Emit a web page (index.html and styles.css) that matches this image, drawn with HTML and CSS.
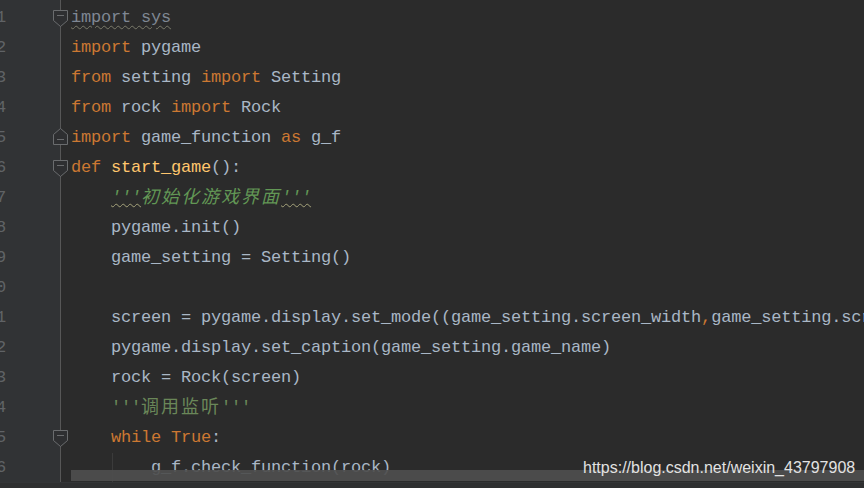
FILE: index.html
```html
<!DOCTYPE html>
<html>
<head>
<meta charset="utf-8">
<link rel="stylesheet" href="styles.css">
</head>
<body>
<div class="ide">
  <div class="gutter">
    <div class="gl"><span class="num">1</span><svg class="fold" viewBox="0 0 15 17"><path d="M0.5 0.5H14.5V10.5L7.5 16.5L0.5 10.5Z"/><path d="M4 5.5H11"/></svg></div>
    <div class="gl"><span class="num">2</span></div>
    <div class="gl"><span class="num">3</span></div>
    <div class="gl"><span class="num">4</span></div>
    <div class="gl"><span class="num">5</span><svg class="fold end" viewBox="0 0 15 17"><path d="M0.5 6.5L7.5 0.5L14.5 6.5V16.5H0.5Z"/><path d="M4 11.5H11"/></svg></div>
    <div class="gl"><span class="num">6</span><svg class="fold" viewBox="0 0 15 17"><path d="M0.5 0.5H14.5V10.5L7.5 16.5L0.5 10.5Z"/><path d="M4 5.5H11"/></svg></div>
    <div class="gl"><span class="num">7</span></div>
    <div class="gl"><span class="num">8</span></div>
    <div class="gl"><span class="num">9</span></div>
    <div class="gl"><span class="num">10</span></div>
    <div class="gl"><span class="num">11</span></div>
    <div class="gl"><span class="num">12</span></div>
    <div class="gl"><span class="num">13</span></div>
    <div class="gl"><span class="num">14</span></div>
    <div class="gl"><span class="num">15</span><svg class="fold" viewBox="0 0 15 17"><path d="M0.5 0.5H14.5V10.5L7.5 16.5L0.5 10.5Z"/><path d="M4 5.5H11"/></svg></div>
    <div class="gl"><span class="num">16</span></div>
  </div>
  <div class="code">
    <div class="l"><span class="unused">import sys</span></div>
    <div class="l"><span class="k">import</span> pygame</div>
    <div class="l"><span class="k">from</span> setting <span class="k">import</span> Setting</div>
    <div class="l"><span class="k">from</span> rock <span class="k">import</span> Rock</div>
    <div class="l"><span class="k">import</span> game_function <span class="k">as</span> g_f</div>
    <div class="l"><span class="k">def</span> <span class="fn">start_game</span>():</div>
    <div class="l">    <span class="doc"><span class="wavy">'''</span><span class="cjk">初始化游戏界面</span><span class="wavy">'''</span></span></div>
    <div class="l">    pygame.init()</div>
    <div class="l">    game_setting = Setting()</div>
    <div class="l"></div>
    <div class="l">    screen = pygame.display.set_mode((game_setting.screen_width<span class="k">,</span>game_setting.screen_height))</div>
    <div class="l">    pygame.display.set_caption(game_setting.game_name)</div>
    <div class="l">    rock = Rock(screen)</div>
    <div class="l">    <span class="str">'''<span class="cjk">调用监听</span>'''</span></div>
    <div class="l">    <span class="k">while</span> <span class="k">True</span>:</div>
    <div class="l guide">        g_f.check_function(rock)</div>
  </div>
</div>
<div class="bottom"></div>
<div class="hscroll"></div>
<div class="watermark">https://blog.csdn.net/weixin_43797908</div>
</body>
</html>
```

FILE: styles.css
```css
html, body {
  margin: 0;
  padding: 0;
}
body {
  width: 864px;
  height: 488px;
  overflow: hidden;
  background: #2b2b2b;
  position: relative;
  font-family: "Liberation Mono", "DejaVu Sans Mono", monospace;
  font-size: 17px;
  letter-spacing: -0.2px;
  color: #a9b7c6;
}
.ide {
  display: flex;
  height: 482px;
  overflow: hidden;
}
.gutter {
  flex: none;
  width: 71px;
  padding-top: 2px;
  display: flex;
  flex-direction: column;
  background: linear-gradient(to right, #313335 0, #313335 60px, #575757 60px, #575757 61px, #2b2b2b 61px);
}
.gl {
  height: 30px;
  display: flex;
  align-items: center;
  flex: none;
}
.num {
  flex: none;
  width: 40px;
  margin-left: -34px;
  text-align: right;
  color: #606366;
  line-height: 30px;
  padding-top: 1px;
}
.fold {
  flex: none;
  width: 15px;
  height: 17px;
  margin-left: 47px;
  margin-top: 2px;
}
.fold.end {
  margin-top: -2px;
}
.fold path {
  fill: #2e2f31;
  stroke: #6a6c6e;
  stroke-width: 1;
}
.fold path + path {
  fill: none;
}
.code {
  flex: 1;
  min-width: 0;
  padding-top: 3px;
}
.l {
  height: 30px;
  line-height: 30px;
  white-space: pre;
  overflow: hidden;
}
.k {
  color: #cc7832;
}
.fn {
  color: #ffc66d;
}
.unused {
  color: #7f8793;
  text-decoration: underline wavy #7a7a6a;
  text-decoration-thickness: 1px;
  text-underline-offset: 3px;
}
.doc {
  color: #629755;
  font-style: italic;
}
.wavy {
  text-decoration: underline wavy #a4a27a;
  text-decoration-thickness: 1px;
  text-underline-offset: 1px;
}
.str {
  color: #6a8759;
}
.cjk {
  font-family: "Noto Sans CJK SC", sans-serif;
  font-size: 18px;
  letter-spacing: 2px;
  line-height: 20px;
  vertical-align: -1px;
}
.guide {
  background: linear-gradient(to right, transparent 41px, #3b3b3b 41px, #3b3b3b 42px, transparent 42px);
}
.bottom {
  height: 6px;
  background: #2e2f30;
  border-top: 1px solid #333537;
  box-sizing: border-box;
}
.hscroll {
  position: absolute;
  left: 71px;
  right: 0;
  top: 470px;
  height: 11px;
  background: rgba(78, 78, 78, 0.92);
}
.watermark {
  position: absolute;
  left: 583px;
  top: 458px;
  font-family: "Liberation Sans", Arial, sans-serif;
  font-size: 16px;
  letter-spacing: 0;
  color: #e2e2e2;
  line-height: 20px;
}
```
